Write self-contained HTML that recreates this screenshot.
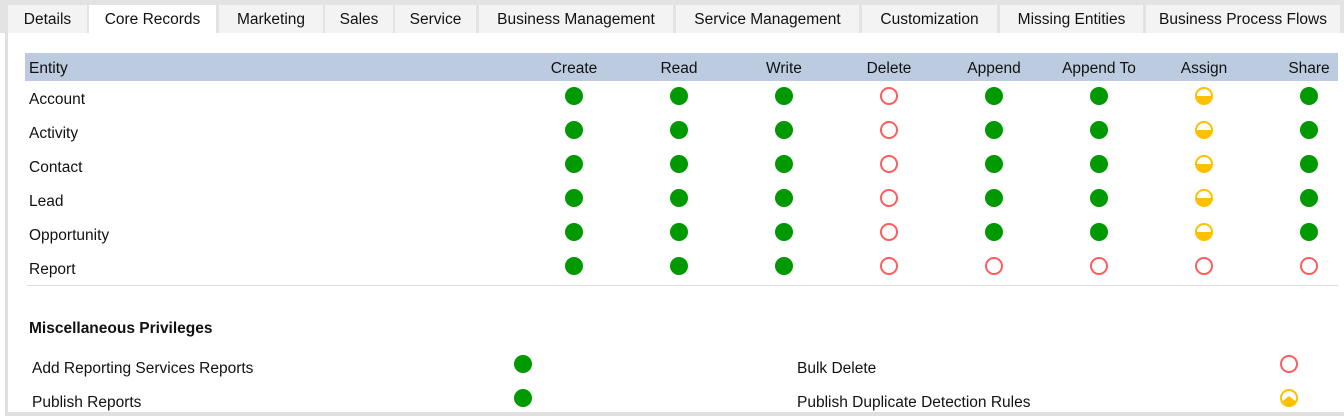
<!DOCTYPE html>
<html><head><meta charset="utf-8"><style>
*{margin:0;padding:0;box-sizing:border-box}
body{width:1344px;height:416px;overflow:hidden;background:#fff;font-family:"Liberation Sans",sans-serif;font-size:15.5px;color:#111;position:relative}
.a{position:absolute;white-space:nowrap}
.tab{position:absolute;top:5px;height:28px;background:#f3f3f3;text-align:center;line-height:30px;font-size:15.5px}
.tab.on{background:#fff;height:30px}
.c{position:absolute;width:18px;height:18px;border-radius:50%}
.g{background:#009900}
.r{border:2px solid #ff5c5c;background:#fff}
.y{border:2px solid #ffc000;background:linear-gradient(#fff 50%,#ffc000 50%)}
.h{position:absolute;text-align:center;width:100px;top:60px}
.t{margin-top:1px}
</style></head><body>
<div class="a" style="left:0;top:0;width:1344px;height:5px;background:#e3e3e3"></div>
<div class="a" style="left:0;top:5px;width:8px;height:28px;background:#e3e3e3"></div>
<div class="a" style="left:5px;top:33px;width:3px;height:383px;background:#e0e0e0"></div>
<div class="a" style="left:1340px;top:5px;width:4px;height:28px;background:#e3e3e3"></div>
<div class="a" style="left:5px;top:412px;width:1339px;height:4px;background:#e0e0e0"></div>
<div class="a" style="left:8px;top:5px;width:1332px;height:28px;background:#e3e3e3"></div>
<div class="tab" style="left:8px;width:79px">Details</div>
<div class="tab on" style="left:89px;width:127px">Core Records</div>
<div class="tab" style="left:219px;width:104px">Marketing</div>
<div class="tab" style="left:325px;width:68px">Sales</div>
<div class="tab" style="left:395px;width:81px">Service</div>
<div class="tab" style="left:479px;width:194px">Business Management</div>
<div class="tab" style="left:676px;width:183px">Service Management</div>
<div class="tab" style="left:862px;width:135px">Customization</div>
<div class="tab" style="left:1000px;width:143px">Missing Entities</div>
<div class="tab" style="left:1146px;width:194px">Business Process Flows</div>

<div class="a" style="left:25px;top:53px;width:1313px;height:28px;background:#bccbe0"></div>
<div class="a" style="left:29px;top:60px">Entity</div>
<div class="h" style="left:524px">Create</div>
<div class="h" style="left:629px">Read</div>
<div class="h" style="left:734px">Write</div>
<div class="h" style="left:839px">Delete</div>
<div class="h" style="left:944px">Append</div>
<div class="h" style="left:1049px">Append To</div>
<div class="h" style="left:1154px">Assign</div>
<div class="h" style="left:1259px">Share</div>

<div class="a" style="left:29px;top:91px">Account</div>
<div class="a" style="left:29px;top:125px">Activity</div>
<div class="a" style="left:29px;top:159px">Contact</div>
<div class="a" style="left:29px;top:193px">Lead</div>
<div class="a" style="left:29px;top:227px">Opportunity</div>
<div class="a" style="left:29px;top:261px">Report</div>

<div id="grid"></div>
<div class="a" style="left:27px;top:285px;width:1311px;height:1px;background:#dcdcdc"></div>

<div class="a" style="left:29px;top:320px;font-weight:bold">Miscellaneous Privileges</div>
<div class="a" style="left:32px;top:360px">Add Reporting Services Reports</div>
<div class="a" style="left:32px;top:394px">Publish Reports</div>
<div class="a" style="left:797px;top:360px">Bulk Delete</div>
<div class="a" style="left:797px;top:394px">Publish Duplicate Detection Rules</div>
<div class="c g" style="left:514px;top:355px"></div>
<div class="c g" style="left:514px;top:389px"></div>
<div class="c r" style="left:1280px;top:355px"></div>
<svg class="a" style="left:1280px;top:389px" width="18" height="18" viewBox="0 0 18 18"><circle cx="9" cy="9" r="8" fill="#fff" stroke="#ffc000" stroke-width="2"/><path d="M2 12.5 L9 7 L16 12.5 A8 8 0 0 1 2 12.5Z" fill="#ffc000"/></svg>

<script>
var xs=[574,679,784,889,994,1099,1204,1309],ys=[96,130,164,198,232,266];
var h='';
for(var r=0;r<6;r++)for(var c=0;c<8;c++){
var t;
if(r<5){t=c==3?'r':(c==6?'y':'g');}else{t=c<3?'g':'r';}
h+='<div class="c '+t+'" style="left:'+(xs[c]-9)+'px;top:'+(ys[r]-9)+'px"></div>';
}
document.getElementById('grid').innerHTML=h;
</script>
</body></html>
